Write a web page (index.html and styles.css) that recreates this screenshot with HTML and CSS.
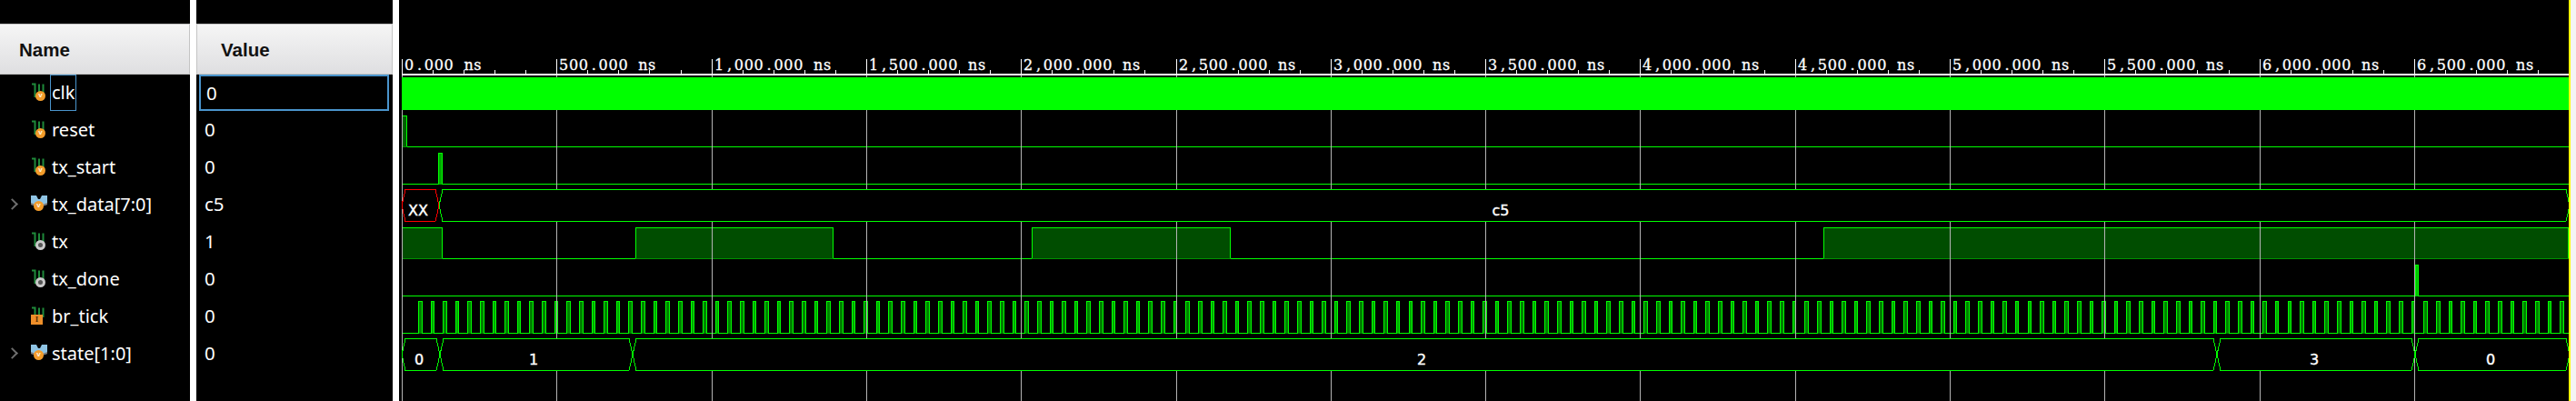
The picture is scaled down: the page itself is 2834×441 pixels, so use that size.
FILE: index.html
```html
<!DOCTYPE html>
<html lang="en">
<head>
    <meta charset="UTF-8">
    <title>Waveform</title>
    <link rel="stylesheet" href="styles.css">
</head>
<body>
<svg class="defs" width="0" height="0">
    <symbol id="ic-wire" viewBox="0 0 18 22">
        <path d="M1 1.5h3.5V15H9M9 1.5V12M13.5 1.5V12" fill="none" stroke="#1f8a3a" stroke-width="2"/>
    </symbol>
    <symbol id="ic-bus" viewBox="0 0 18 22">
        <path d="M0 1h6l2 4h2l2-4h6v10l-5 1H5l-5-1z" fill="#8fc4e4"/>
        <path d="M0 9l5 2v2l-5-2zM18 9l-5 2v2l5-2z" fill="#7a7a7a"/>
    </symbol>
</svg>
<div class="main">
    <div class="col col-name">
        <div class="head head-name">Name</div>
        <div class="row"><span class="ic"><svg><use href="#ic-wire"/></svg><i class="dot dot-v">v</i></span><span class="lbl lbl-on">clk</span></div>
        <div class="row"><span class="ic"><svg><use href="#ic-wire"/></svg><i class="dot dot-v">v</i></span><span class="lbl">reset</span></div>
        <div class="row"><span class="ic"><svg><use href="#ic-wire"/></svg><i class="dot dot-v">v</i></span><span class="lbl">tx_start</span></div>
        <div class="row"><span class="chev"></span><span class="ic"><svg><use href="#ic-bus"/></svg><i class="dot dot-v dot-bus">v</i></span><span class="lbl">tx_data[7:0]</span></div>
        <div class="row"><span class="ic"><svg><use href="#ic-wire"/></svg><i class="dot dot-o"></i></span><span class="lbl">tx</span></div>
        <div class="row"><span class="ic"><svg><use href="#ic-wire"/></svg><i class="dot dot-o"></i></span><span class="lbl">tx_done</span></div>
        <div class="row"><span class="ic"><svg><use href="#ic-wire"/></svg><i class="box-i">I</i></span><span class="lbl">br_tick</span></div>
        <div class="row"><span class="chev"></span><span class="ic"><svg><use href="#ic-bus"/></svg><i class="dot dot-v dot-bus">v</i></span><span class="lbl">state[1:0]</span></div>
    </div>
    <div class="gap"></div>
    <div class="col col-val">
        <div class="head head-val">Value</div>
        <div class="val val-on">0</div>
        <div class="val">0</div>
        <div class="val">0</div>
        <div class="val">c5</div>
        <div class="val">1</div>
        <div class="val">0</div>
        <div class="val">0</div>
        <div class="val">0</div>
    </div>
    <div class="gap"></div>
    <svg class="wave" id="wave" width="2395" height="441" shape-rendering="crispEdges"></svg>
</div>
<script src="waves.js"></script>
</body>
</html>
```

FILE: styles.css
```css
*{
    margin:0;
    padding:0;
    box-sizing:border-box;
}
html,body{
    width:100%;
    height:100%;
    background:#000;
    overflow:hidden;
}
.defs{
    display:block;
    height:0;
}
.main{
    display:flex;
    height:441px;
}
.col{
    padding-top:26px;
    font-family:"Noto Sans","Liberation Sans",sans-serif;
    color:#fff;
}
.col-name{
    width:209px;
}
.col-val{
    width:216px;
}
.gap{
    width:7px;
    background:#fff;
}
.head{
    height:56px;
    margin-bottom:-1px;
    line-height:56px;
    background:linear-gradient(#f5f5f5,#dfdfe1);
    border:1px solid #c4c4c4;
    color:#111;
    font-family:"Liberation Sans",sans-serif;
    font-size:20.5px;
    font-weight:bold;
}
.head-name{
    padding-left:21px;
    border-left:0;
}
.head-val{
    padding-left:26px;
}
.row{
    height:41px;
    display:flex;
    align-items:center;
    padding-left:34px;
    position:relative;
}
.chev{
    position:absolute;
    left:9px;
    top:16px;
    width:9px;
    height:9px;
    border-top:2px solid #6d6d6d;
    border-right:2px solid #6d6d6d;
    transform:rotate(45deg);
}
.ic{
    position:relative;
    width:18px;
    height:22px;
    flex:none;
    margin-right:3px;
}
.ic svg{
    display:block;
    width:18px;
    height:22px;
}
.dot{
    position:absolute;
    left:5px;
    top:9px;
    width:11px;
    height:11px;
    border-radius:50%;
    font:bold 8px/10px "Liberation Sans",sans-serif;
    text-align:center;
}
.dot-v{
    background:#f39c2b;
    color:#fff5e0;
}
.dot-bus{
    left:3px;
    top:7px;
}
.dot-o{
    background:#555;
    border:3px solid #c9c9c9;
}
.box-i{
    position:absolute;
    left:0;
    top:9px;
    width:13px;
    height:11px;
    background:#ee8f2a;
    color:#5a3200;
    font:bold 9px/11px "Liberation Serif",serif;
    text-align:center;
}
.lbl{
    font-size:20px;
    line-height:38px;
    height:40px;
    white-space:nowrap;
    padding:0 1px;
    border:1px solid transparent;
}
.lbl-on{
    border-color:#4a94cc;
}
.val{
    height:41px;
    line-height:41px;
    padding-left:9px;
    font-size:20.5px;
}
.val-on{
    height:40px;
    margin:1px 4px 0 3px;
    padding-left:6px;
    border:2px solid #4a94cc;
    line-height:36px;
}
.wave{
    display:block;
    flex:none;
    background:#000;
}
.wave text{
    fill:#fff;
}
.t-ruler{
    font-family:"DejaVu Serif",serif;
    font-size:16px;
    stroke:#fff;
    stroke-width:.3px;
}
.t-bus{
    font-family:"DejaVu Sans",sans-serif;
    font-size:16px;
    stroke:#fff;
    stroke-width:.4px;
}
```

FILE: waves.js
```js
// 波形区域，坐标都是相对svg左边 (页面x-439)
var oWave=document.getElementById('wave');
var html='';
var x0=3;            // 0 ns
var step=170.3;      // 500 ns
var right=2387;      // 黄色光标
var GREEN='#00ff00';
var DARK='#004d00';
var EDGE='#009000';

function px(v){
    return Math.round(v);
}
function line(d,color){
    html+='<path d="'+d+'" fill="none" stroke="'+color+'" stroke-width="1"/>';
}
function rect(x,y,w,h,color){
    html+='<rect x="'+x+'" y="'+y+'" width="'+w+'" height="'+h+'" fill="'+color+'"/>';
}
function text(x,y,s){
    html+='<text x="'+x+'" y="'+y+'" class="t-bus" text-anchor="middle">'+s+'</text>';
}
// 标尺文字是等宽的，每个字符单独给x
function rulerText(x,y,s){
    var xs=[];
    for(var i=0;i<s.length;i++){
        var off=(s[i]=='.'||s[i]==',')?3:0;
        xs.push((x+i*10.9+off).toFixed(1));
    }
    html+='<text x="'+xs.join(' ')+'" y="'+y+'" class="t-ruler">'+s+'</text>';
}
// 一个高电平：亮边框+填充，bottom参数是底边颜色
function high(x1,x2,top,bottom,fill,edge){
    rect(x1,top,x2-x1,bottom-top,fill);
    line('M'+(x1+.5)+' '+bottom+'V'+(top+.5)+'H'+(x2-.5)+'V'+bottom,GREEN);
    if(edge){
        line('M'+x1+' '+(bottom-.5)+'H'+x2,edge);
    }
}
// 总线的一段，两头是斜的，填黑把网格线盖住
function bus(x1,x2,top,bottom,color){
    var mid=(top+bottom)/2;
    var pts=[[x1,mid],[x1+4,top],[x2-4,top],[x2,mid],[x2-4,bottom],[x1+4,bottom]];
    var d='M'+pts.map(function(p){return p[0]+' '+p[1];}).join('L')+'Z';
    html+='<path d="'+d+'" fill="#000" stroke="'+color+'" stroke-width="1"/>';
}

// 先画会被网格线压住的信号 ------------------
// reset
line('M'+x0+' 161.5H'+right,GREEN);
high(x0,x0+6,127,162,'#006000',EDGE);

// tx_start
line('M'+x0+' 202.5H'+right,GREEN);
high(43,48,168,203,'#00a800');

// tx
line('M'+x0+' 284.5H'+right,GREEN);
high(x0,48,250,285,DARK,EDGE);
high(260,478,250,285,DARK,EDGE);
high(696,915,250,285,DARK,EDGE);
high(1567,right,250,285,DARK,EDGE);

// tx_done
line('M'+x0+' 325.5H'+right,GREEN);
high(2218,2222,291,326,'#00c000');

// br_tick
line('M'+x0+' 366.5H'+right,GREEN);
for(var i=0;i<174;i++){
    var s=21.4+i*13.62;
    var a=Math.floor(s);
    var b=Math.floor(s+4.6);
    high(a,b,331,367,b-a>4?'#008000':'#00a800');
}

// 网格线
var labels=['0.000 ns','500.000 ns','1,000.000 ns','1,500.000 ns','2,000.000 ns','2,500.000 ns','3,000.000 ns','3,500.000 ns','4,000.000 ns','4,500.000 ns','5,000.000 ns','5,500.000 ns','6,000.000 ns','6,500.000 ns'];
for(i=0;i<labels.length;i++){
    rect(px(x0+step*i),65,1,376,'#b4b4b4');
}

// 标尺
rect(x0,81,right-x0,2,'#fff');
for(i=0;i<labels.length;i++){
    var x=px(x0+step*i);
    rect(x,65,1,16,'#fff');
    rulerText(x+3,77,labels[i]);
    for(var j=1;j<5;j++){
        rect(px(x0+step*i+step*j/5),77,1,4,'#fff');
    }
}

// clk
rect(x0,85,right-x0,36,GREEN);

// tx_data
bus(x0,44,208.5,243.5,'#ff0000');
text(21,237,'XX');
bus(44,right+1,208.5,243.5,GREEN);
text(1212,237,'c5');

// state
bus(x0,45,372.5,407.5,GREEN);
bus(45,257,372.5,407.5,GREEN);
bus(257,2000,372.5,407.5,GREEN);
bus(2000,2218,372.5,407.5,GREEN);
bus(2218,right+1,372.5,407.5,GREEN);
text(22,401,'0');
text(148,401,'1');
text(1125,401,'2');
text(2107,401,'3');
text(2301,401,'0');

// 光标和右边的白边
rect(right,0,2,441,'#ffff00');
rect(right+2,0,6,441,'#f4f4f4');

oWave.innerHTML=html;
```
